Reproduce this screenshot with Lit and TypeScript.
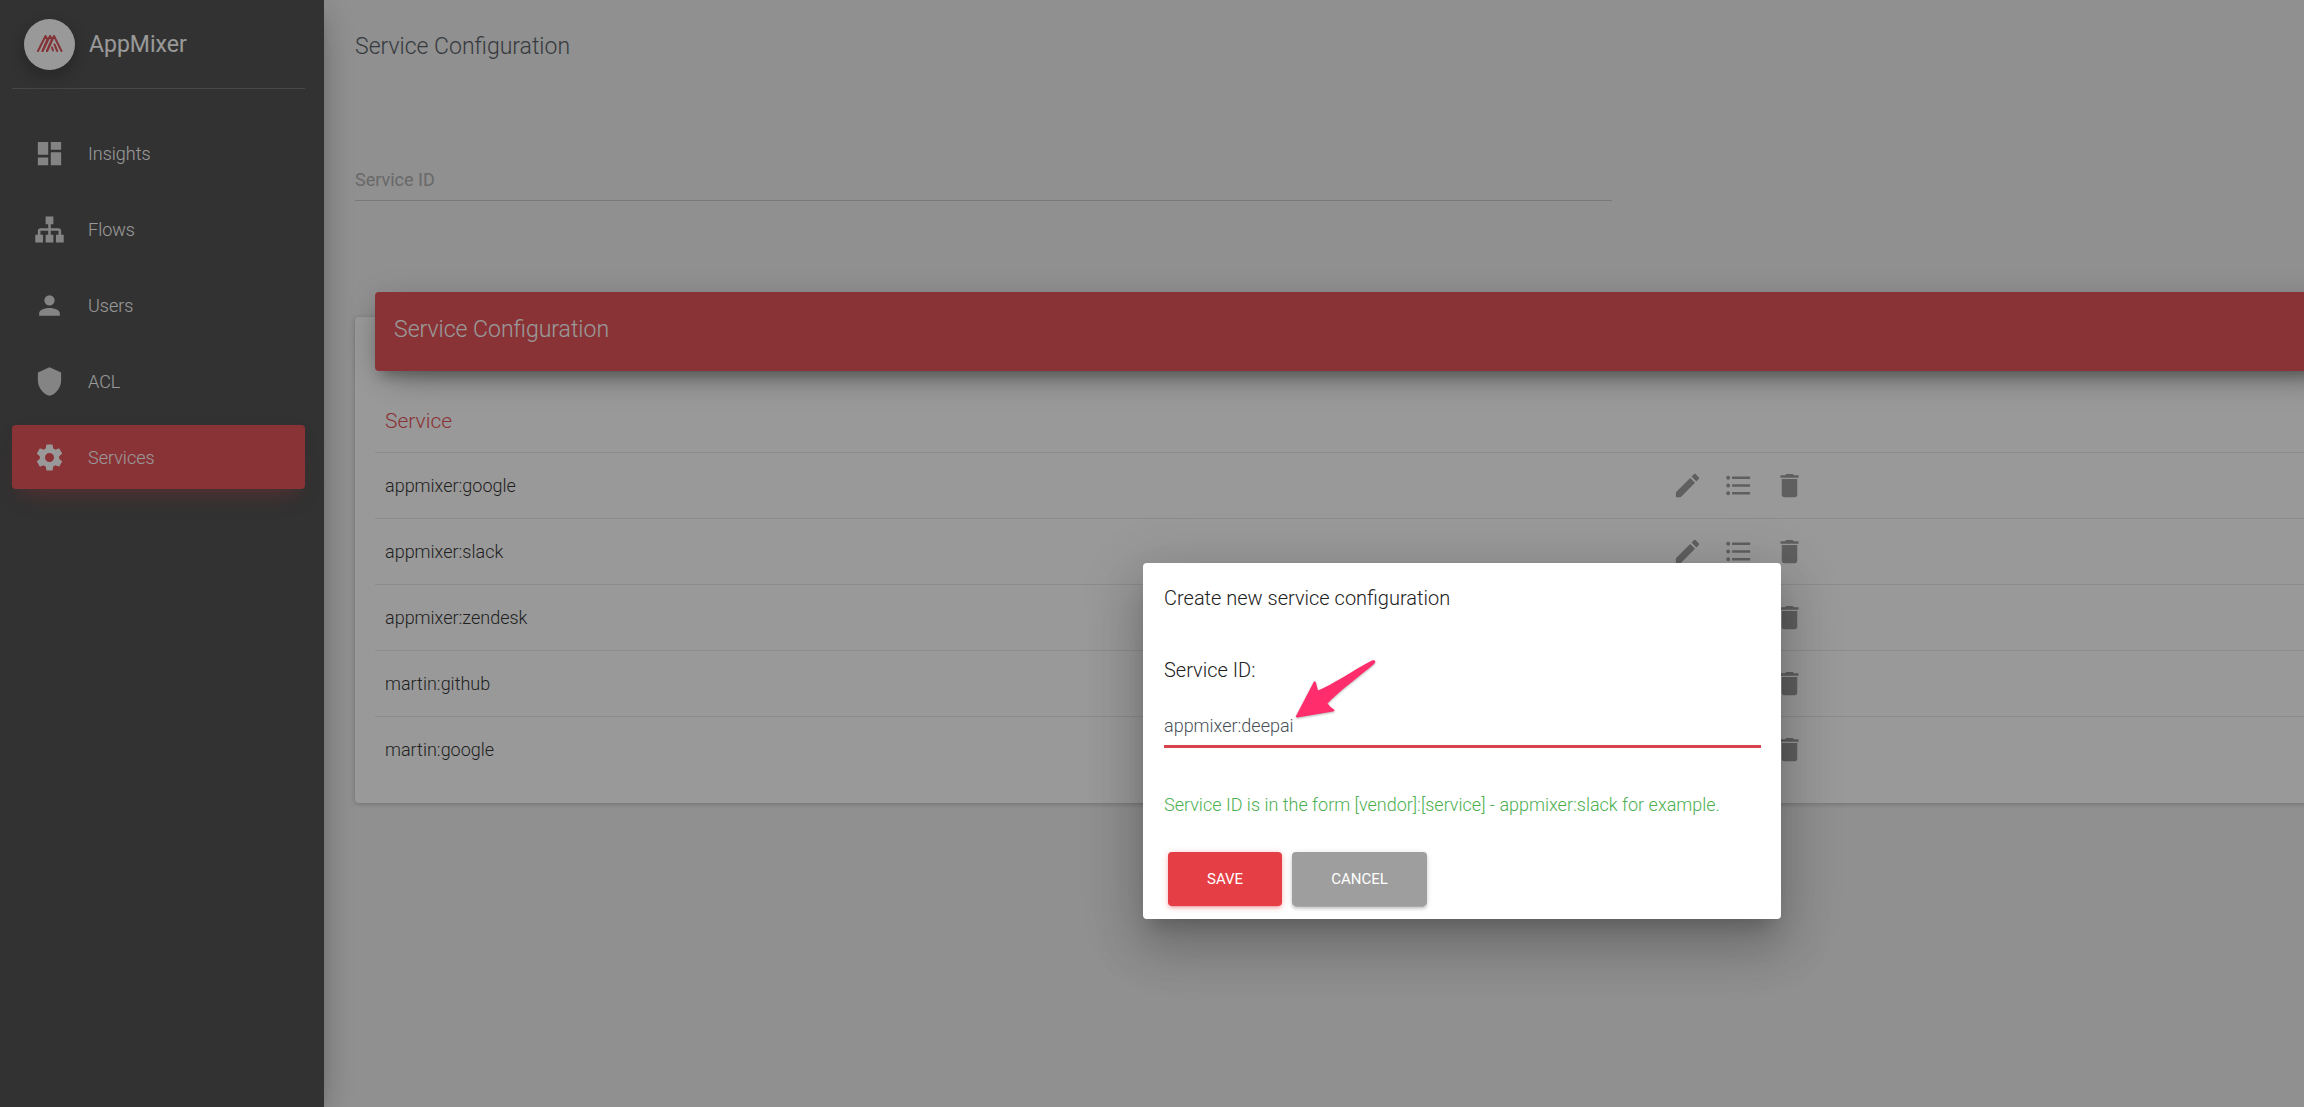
import { LitElement, html, css, svg } from "lit";
import { customElement, property, state } from "lit/decorators.js";

const ICONS: Record<string, string> = {
  dashboard: "M13,3V9H21V3M13,21H21V11H13M3,21H11V15H3M3,13H11V3H3V13Z",
  sitemap:
    "M9,2V8H11V11H5C3.89,11 3,11.89 3,13V16H1V22H7V16H5V13H11V16H9V22H15V16H13V13H19V16H17V22H23V16H21V13C21,11.89 20.11,11 19,11H13V8H15V2H9Z",
  account:
    "M12,4A4,4 0 0,1 16,8A4,4 0 0,1 12,12A4,4 0 0,1 8,8A4,4 0 0,1 12,4M12,14C16.42,14 20,15.79 20,18V20H4V18C4,15.79 7.58,14 12,14Z",
  shield: "M12,1L3,5V11C3,16.55 6.84,21.74 12,23C17.16,21.74 21,16.55 21,11V5L12,1Z",
  settings:
    "M12,15.5A3.5,3.5 0 0,1 8.5,12A3.5,3.5 0 0,1 12,8.5A3.5,3.5 0 0,1 15.5,12A3.5,3.5 0 0,1 12,15.5M19.43,12.97C19.47,12.65 19.5,12.33 19.5,12C19.5,11.67 19.47,11.34 19.43,11L21.54,9.37C21.73,9.22 21.78,8.95 21.66,8.73L19.66,5.27C19.54,5.05 19.27,4.96 19.05,5.05L16.56,6.05C16.04,5.66 15.5,5.32 14.87,5.07L14.5,2.42C14.46,2.18 14.25,2 14,2H10C9.75,2 9.54,2.18 9.5,2.42L9.13,5.07C8.5,5.32 7.96,5.66 7.44,6.05L4.95,5.05C4.73,4.96 4.46,5.05 4.34,5.27L2.34,8.73C2.21,8.95 2.27,9.22 2.46,9.37L4.57,11C4.53,11.34 4.5,11.67 4.5,12C4.5,12.33 4.53,12.65 4.57,12.97L2.46,14.63C2.27,14.78 2.21,15.05 2.34,15.27L4.34,18.73C4.46,18.95 4.73,19.03 4.95,18.95L7.44,17.94C7.96,18.34 8.5,18.68 9.13,18.93L9.5,21.58C9.54,21.82 9.75,22 10,22H14C14.25,22 14.46,21.82 14.5,21.58L14.87,18.93C15.5,18.67 16.04,18.34 16.56,17.94L19.05,18.95C19.27,19.03 19.54,18.95 19.66,18.73L21.66,15.27C21.78,15.05 21.73,14.78 21.54,14.63L19.43,12.97Z",
  pencil:
    "M20.71,7.04C21.1,6.65 21.1,6 20.71,5.63L18.37,3.29C18,2.9 17.35,2.9 16.96,3.29L15.12,5.12L18.87,8.87M3,17.25V21H6.75L17.81,9.93L14.06,6.18L3,17.25Z",
  list: "M7,5H21V7H7V5M7,13V11H21V13H7M4,4.5A1.5,1.5 0 0,1 5.5,6A1.5,1.5 0 0,1 4,7.5A1.5,1.5 0 0,1 2.5,6A1.5,1.5 0 0,1 4,4.5M4,10.5A1.5,1.5 0 0,1 5.5,12A1.5,1.5 0 0,1 4,13.5A1.5,1.5 0 0,1 2.5,12A1.5,1.5 0 0,1 4,10.5M7,19V17H21V19H7M4,16.5A1.5,1.5 0 0,1 5.5,18A1.5,1.5 0 0,1 4,19.5A1.5,1.5 0 0,1 2.5,18A1.5,1.5 0 0,1 4,16.5Z",
  trash: "M19,4H15.5L14.5,3H9.5L8.5,4H5V6H19M6,19A2,2 0 0,0 8,21H16A2,2 0 0,0 18,19V7H6V19Z",
};

@customElement("mx-icon")
class MxIcon extends LitElement {
  @property() name = "";

  static styles = css`
    :host {
      display: inline-flex;
    }
    .icon {
      width: 31px;
      height: 31px;
      fill: currentColor;
    }
  `;

  render() {
    return html`<svg class="icon" viewBox="0 0 24 24" aria-hidden="true">
      ${svg`<path d=${ICONS[this.name]}></path>`}
    </svg>`;
  }
}

@customElement("mx-sidebar")
class MxSidebar extends LitElement {
  static styles = css`
    :host {
      display: block;
      box-sizing: border-box;
      padding: 0 19px 0 12px;
      background: #424242;
      color: #fff;
      box-shadow: 0 13px 38px -15px rgba(0, 0, 0, 0.42), 0 5px 32px 0 rgba(0, 0, 0, 0.12),
        0 10px 13px -6px rgba(0, 0, 0, 0.2);
    }
    .brand {
      display: flex;
      align-items: center;
      gap: 14px;
      box-sizing: border-box;
      height: 89px;
      padding: 1px 12px 0;
      border-bottom: 1px solid #686868;
      font-size: 23px;
      line-height: 32px;
    }
    .logo {
      width: 51px;
      height: 51px;
      border-radius: 50%;
      background: #fff;
      box-shadow: 0 6px 20px rgba(0, 0, 0, 0.4);
    }
    .logo-mark {
      display: block;
      width: 51px;
      height: 51px;
      fill: none;
      stroke: #d8444b;
      stroke-width: 2;
      stroke-linecap: round;
      stroke-linejoin: round;
    }
    .menu {
      display: flex;
      flex-direction: column;
      gap: 12px;
      margin: 0;
      padding: 32px 0;
      list-style: none;
    }
    .item {
      display: flex;
      align-items: center;
      gap: 23px;
      height: 64px;
      padding: 0 22px;
      border-radius: 4px;
      color: #fff;
      font-size: 18px;
      font-weight: 300;
      text-decoration: none;
    }
    .item-icon {
      opacity: 0.8;
    }
    .item.active {
      background: #e4434a;
      box-shadow: 0 15px 26px -13px rgba(228, 67, 74, 0.4), 0 5px 26px 0 rgba(0, 0, 0, 0.12),
        0 10px 13px -6px rgba(228, 67, 74, 0.2);
    }
    .item.active .item-icon {
      opacity: 1;
    }
  `;

  private items = [
    ["dashboard", "Insights"],
    ["sitemap", "Flows"],
    ["account", "Users"],
    ["shield", "ACL"],
    ["settings", "Services"],
  ];

  render() {
    return html`
      <div class="brand">
        <span class="logo">
          <svg class="logo-mark" viewBox="0 0 51 51" aria-hidden="true">
            <path d="M14 32 L21.5 17 L23.5 20.5 M18.5 32 L26 17 L28 20.5 M23 32 L30 17 L37.5 32" />
            <path d="M23.5 20.5 L18.5 32 M28 20.5 L23 32 M28 28.5 L29 31.5 M30.5 25.5 L33.2 32" />
          </svg>
        </span>
        <span>AppMixer</span>
      </div>
      <nav>
        <ul class="menu">
          ${this.items.map(
            ([icon, label]) => html`<li>
              <a class="item ${label === "Services" ? "active" : ""}" href="#${label.toLowerCase()}">
                <mx-icon class="item-icon" name=${icon}></mx-icon>${label}
              </a>
            </li>`
          )}
        </ul>
      </nav>
    `;
  }
}

@customElement("mx-services")
class MxServices extends LitElement {
  static styles = css`
    :host {
      display: block;
      padding: 0 0 40px 31px;
      overflow: hidden;
    }
    .title {
      margin: 0;
      padding-top: 31px;
      color: #495057;
      font-size: 23px;
      font-weight: 300;
      line-height: 32px;
    }
    .search {
      display: block;
      box-sizing: border-box;
      width: 64.5%;
      height: 41px;
      margin-top: 97px;
      padding: 0 0 2px;
      border: 0;
      border-bottom: 1px solid #c4c4c4;
      border-radius: 0;
      outline: 0;
      background: transparent;
      color: #333;
      font: 400 18px Roboto, sans-serif;
    }
    .search::placeholder {
      color: #a6a6a6;
      opacity: 1;
    }
    .card {
      display: flex;
      flex-direction: column;
      margin: 116px -40px 0 0;
      padding: 0 0 21px 20px;
      border-radius: 4px;
      background: #fff;
      box-shadow: 0 1px 5px 0 rgba(0, 0, 0, 0.25);
    }
    .card-head {
      box-sizing: border-box;
      height: 79px;
      margin-top: -25px;
      padding: 22px 19px;
      border-radius: 4px;
      background: #e4434a;
      box-shadow: 0 13px 38px -15px rgba(0, 0, 0, 0.42), 0 5px 32px 0 rgba(0, 0, 0, 0.12),
        0 10px 13px -6px rgba(0, 0, 0, 0.3);
    }
    .card-title {
      margin: 0;
      color: #fff;
      font-size: 23px;
      font-weight: 300;
      line-height: 32px;
    }
    .services {
      width: 100%;
      margin-top: 18px;
      border-collapse: collapse;
      table-layout: fixed;
      color: #212121;
      font-size: 18px;
      font-weight: 300;
    }
    .name-col {
      box-sizing: border-box;
      width: 65.4%;
    }
    th {
      height: 63px;
      padding: 0 10px;
      color: #e53e45;
      font-size: 21px;
      font-weight: 300;
      text-align: left;
    }
    td {
      height: 65px;
      padding: 0 10px;
      border-top: 1px solid #e8e8e8;
    }
    .actions {
      padding: 0;
    }
    .buttons {
      display: flex;
      gap: 20px;
      padding-left: 9px;
    }
    .action {
      display: flex;
      padding: 0;
      border: 0;
      background: none;
      color: #949494;
    }
  `;

  private services = [
    "appmixer:google",
    "appmixer:slack",
    "appmixer:zendesk",
    "martin:github",
    "martin:google",
  ];

  render() {
    return html`
      <h1 class="title">Service Configuration</h1>
      <input class="search" type="text" placeholder="Service ID" aria-label="Service ID" />
      <section class="card">
        <header class="card-head"><h2 class="card-title">Service Configuration</h2></header>
        <table class="services">
          <thead>
            <tr>
              <th class="name-col" scope="col">Service</th>
              <th></th>
            </tr>
          </thead>
          <tbody>
            ${this.services.map(
              (name) => html`<tr>
                <td>${name}</td>
                <td class="actions">
                  <div class="buttons">
                    <button class="action" aria-label="Edit"><mx-icon name="pencil"></mx-icon></button>
                    <button class="action" aria-label="List"><mx-icon name="list"></mx-icon></button>
                    <button class="action" aria-label="Delete"><mx-icon name="trash"></mx-icon></button>
                  </div>
                </td>
              </tr>`
            )}
          </tbody>
        </table>
      </section>
    `;
  }
}

@customElement("mx-create-dialog")
class MxCreateDialog extends LitElement {
  @state() private serviceId = "appmixer:deepai";

  static styles = css`
    :host {
      display: block;
    }
    .dialog {
      position: relative;
      box-sizing: border-box;
      padding: 19px 20px 13px 21px;
      border-radius: 4px;
      background: #fff;
      color: #212121;
      font-weight: 300;
      box-shadow: 0 14px 19px -9px rgba(0, 0, 0, 0.2), 0 31px 49px 4px rgba(0, 0, 0, 0.14),
        0 12px 59px 10px rgba(0, 0, 0, 0.12);
    }
    .heading {
      margin: 0;
      font-size: 20px;
      font-weight: 300;
      line-height: 32px;
    }
    .form {
      display: flex;
      flex-direction: column;
    }
    .label {
      margin-top: 40px;
      font-size: 20px;
      line-height: 32px;
    }
    .field {
      box-sizing: border-box;
      width: 100%;
      height: 42px;
      margin-top: 20px;
      padding: 0;
      border: 0;
      border-bottom: 3px solid #d8444b;
      border-radius: 0;
      outline: 0;
      background: transparent;
      color: #495057;
      font: 300 18px Roboto, sans-serif;
    }
    .hint {
      margin: 41px 0 0;
      color: #4caf50;
      font-size: 18px;
      line-height: 32px;
    }
    .row {
      display: flex;
      gap: 10px;
      margin-top: 31px;
      padding-left: 4px;
    }
    .btn {
      height: 54px;
      padding: 0 39px;
      border: 0;
      border-radius: 4px;
      color: #fff;
      font: 400 15px Roboto, sans-serif;
      text-transform: uppercase;
      box-shadow: 0 3px 3px 0 rgba(0, 0, 0, 0.14), 0 4px 1px -3px rgba(0, 0, 0, 0.2),
        0 1px 6px 0 rgba(0, 0, 0, 0.12);
    }
    .save {
      background: #e53e45;
      box-shadow: 0 3px 3px 0 rgba(229, 62, 69, 0.14), 0 4px 1px -3px rgba(229, 62, 69, 0.2),
        0 1px 6px 0 rgba(229, 62, 69, 0.3);
    }
    .cancel {
      background: #9e9e9e;
    }
    .pointer {
      position: absolute;
      top: 94px;
      left: 149px;
      width: 86px;
      height: 66px;
      fill: #ff2d6b;
      filter: drop-shadow(0 1px 1px rgba(0, 0, 0, 0.3));
      pointer-events: none;
    }
  `;

  render() {
    return html`
      <div class="dialog" role="dialog" aria-labelledby="heading">
        <h2 class="heading" id="heading">Create new service configuration</h2>
        <form class="form" @submit=${(e: Event) => e.preventDefault()}>
          <label class="label" for="service-id">Service ID:</label>
          <input
            class="field"
            id="service-id"
            type="text"
            .value=${this.serviceId}
            @input=${(e: Event) => (this.serviceId = (e.target as HTMLInputElement).value)}
          />
          <p class="hint">Service ID is in the form [vendor]:[service] - appmixer:slack for example.</p>
          <div class="row">
            <button class="btn save" type="submit">Save</button>
            <button class="btn cancel" type="button">Cancel</button>
          </div>
        </form>
        <svg class="pointer" viewBox="0 0 86 66" aria-hidden="true">
          <path
            d="M4 59 L22 24.5 Q23.5 23.5 24 26 L26 33.5 C40 28 60 14 80 3.5 C83 2.5 84.5 4.5 82 7 C68 19 46 35 35.5 46.5 Q38 50 42 52.5 Q43.5 54 41 54.5 L5.5 60.5 Q3.5 60.5 4 59 Z"
          />
        </svg>
      </div>
    `;
  }
}

@customElement("app-root")
class AppRoot extends LitElement {
  static styles = css`
    :host {
      display: block;
      position: relative;
      min-height: 100vh;
      overflow: hidden;
      background: #eee;
      font-family: Roboto, sans-serif;
    }
    .layout {
      display: grid;
      grid-template-columns: 324px minmax(0, 1fr);
      min-height: 100vh;
    }
    .sidebar {
      z-index: 1;
    }
    .scrim {
      position: absolute;
      inset: 0;
      z-index: 2;
      background: rgba(33, 33, 33, 0.46);
    }
    .popup {
      position: absolute;
      top: 563px;
      left: 1143px;
      z-index: 3;
      width: 638px;
    }
  `;

  render() {
    return html`
      <div class="layout">
        <mx-sidebar class="sidebar"></mx-sidebar>
        <mx-services></mx-services>
      </div>
      <div class="scrim"></div>
      <mx-create-dialog class="popup"></mx-create-dialog>
    `;
  }
}
